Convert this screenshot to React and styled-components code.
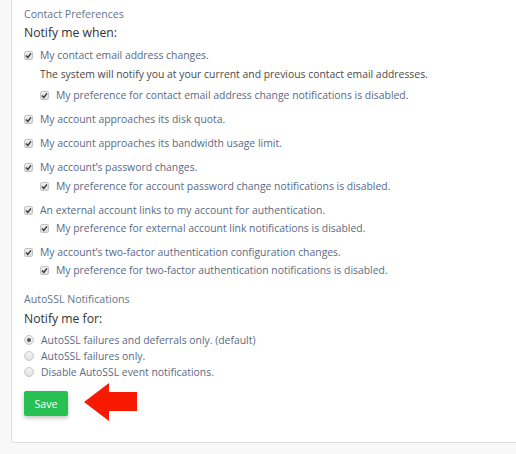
import React from "react";
import styled, { createGlobalStyle } from "styled-components";

const Global = createGlobalStyle`
  html, body { margin: 0; padding: 0; background: #f8f8f8; }
  body { font-family: "Open Sans", "Liberation Sans", sans-serif; width: 516px; height: 454px; overflow: hidden; }
`;

const Panel = styled.div`
  margin-left: 11px;
  width: 540px;
  background: #fff;
  border: 1px solid #dcdcdc;
  border-top: none;
  border-radius: 0 0 0 3px;
  padding: 6px 12px 21px 12px;
  box-sizing: border-box;
`;

const SectionTitle = styled.div`
  font-size: 10.6px;
  line-height: 16px;
  color: #65748c;
  margin-top: ${(p) => p.$mt || 0}px;
`;

const Lead = styled.div`
  font-size: 12.2px;
  line-height: 18px;
  color: #333;
  margin: ${(p) => p.$mt ?? 2}px 0 4px;
`;

const Group = styled.div`
  margin-bottom: 6px;
`;

const Row = styled.label`
  display: flex;
  align-items: center;
  gap: 7px;
  font-size: 10.4px;
  line-height: 18px;
  color: #5a6a85;
  padding-left: ${(p) => (p.$sub ? 16 : 0)}px;
  margin-top: ${(p) => p.$mt || 0}px;
`;

const Desc = styled.div`
  font-size: 10.4px;
  line-height: 18px;
  color: #4a4a4a;
  padding-left: 16px;
  margin-top: 1px;
`;

const Box = styled.span`
  width: 9px;
  height: 9px;
  flex: none;
  box-sizing: border-box;
  border: 1px solid #c4c4c4;
  border-radius: 2px;
  background: linear-gradient(#eee, #ddd);
  display: flex;
  align-items: center;
  justify-content: center;
`;

const Radio = styled.span`
  width: 10px;
  height: 10px;
  flex: none;
  box-sizing: border-box;
  border: 1px solid #c8c8c8;
  border-radius: 50%;
  background: linear-gradient(#f2f2f2, #e2e2e2);
  display: flex;
  align-items: center;
  justify-content: center;
  &::after {
    content: "";
    width: 4px;
    height: 4px;
    border-radius: 50%;
    background: ${(p) => (p.$on ? "#555" : "transparent")};
  }
`;

const RadioRow = styled(Row)`
  line-height: 16px;
`;

const Actions = styled.div`
  display: flex;
  align-items: flex-start;
  gap: 16px;
  margin-top: 3px;
`;

const SaveButton = styled.button`
  width: 44px;
  height: 25px;
  margin-top: 8px;
  border: none;
  border-radius: 2px;
  background: #26c152;
  color: #fff;
  font-family: inherit;
  font-size: 10.6px;
  box-shadow: 0 2px 4px rgba(0, 0, 0, 0.25);
  padding: 0;
`;

const Check = () => (
  <Box>
    <svg width="7" height="7" viewBox="0 0 7 7">
      <path d="M1 3.6 L2.8 5.4 L6 1.4" stroke="#333" strokeWidth="1.4" fill="none" />
    </svg>
  </Box>
);

const Arrow = () => (
  <svg width="54" height="38" viewBox="0 0 54 38">
    <polygon points="0,19 25,0 25,9 53,9 53,28 25,28 25,38" fill="#f71a00" />
  </svg>
);

export default function App() {
  return (
    <>
      <Global />
      <Panel>
        <SectionTitle>Contact Preferences</SectionTitle>
        <Lead>Notify me when:</Lead>

        <Group>
          <Row><Check />My contact email address changes.</Row>
          <Desc>The system will notify you at your current and previous contact email addresses.</Desc>
          <Row $sub $mt={3}><Check />My preference for contact email address change notifications is disabled.</Row>
        </Group>
        <Group>
          <Row><Check />My account approaches its disk quota.</Row>
        </Group>
        <Group>
          <Row><Check />My account approaches its bandwidth usage limit.</Row>
        </Group>
        <Group>
          <Row><Check />My account’s password changes.</Row>
          <Row $sub $mt={1}><Check />My preference for account password change notifications is disabled.</Row>
        </Group>
        <Group>
          <Row><Check />An external account links to my account for authentication.</Row>
          <Row $sub><Check />My preference for external account link notifications is disabled.</Row>
        </Group>
        <Group>
          <Row $mt={1}><Check />My account’s two-factor authentication configuration changes.</Row>
          <Row $sub><Check />My preference for two-factor authentication notifications is disabled.</Row>
        </Group>

        <SectionTitle $mt={12}>AutoSSL Notifications</SectionTitle>
        <Lead $mt={3}>Notify me for:</Lead>
        <RadioRow $mt={1}><Radio $on />AutoSSL failures and deferrals only. (default)</RadioRow>
        <RadioRow><Radio />AutoSSL failures only.</RadioRow>
        <RadioRow><Radio />Disable AutoSSL event notifications.</RadioRow>

        <Actions>
          <SaveButton>Save</SaveButton>
          <Arrow />
        </Actions>
      </Panel>
    </>
  );
}
